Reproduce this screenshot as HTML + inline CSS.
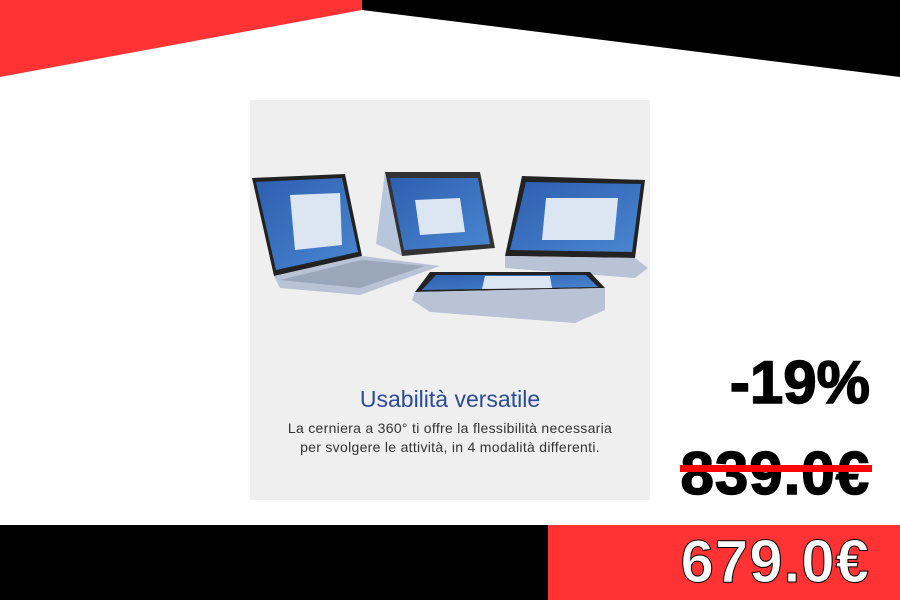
<!DOCTYPE html>
<html><head><meta charset="utf-8"><style>
*{margin:0;padding:0;box-sizing:border-box}
body{width:900px;height:600px;overflow:hidden;background:#fff;position:relative;font-family:"Liberation Sans",sans-serif}
.abs{position:absolute}
.card{left:250px;top:100px;width:400px;height:400px;background:#efefef}
.t1{left:250px;width:400px;top:386px;text-align:center;color:#2a4a9a;font-size:23px}
.t2{left:250px;width:400px;top:419px;text-align:center;color:#333;font-size:14px;line-height:19px;letter-spacing:0.3px}
.pr{right:30px;font-weight:bold;font-size:60px;line-height:60px;text-align:right}
</style></head><body>
<svg class="abs" style="left:0;top:0" width="900" height="80">
<polygon points="0,0 362,0 362,10 0,77" fill="#ff3333"/>
<polygon points="362,0 900,0 900,77 362,10" fill="#000"/>
</svg>
<div class="abs card"></div>
<svg class="abs" style="left:250px;top:160px" width="400" height="170">
<defs><linearGradient id="s" x1="0" y1="0" x2="1" y2="1"><stop offset="0" stop-color="#2d5fb0"/><stop offset="1" stop-color="#4a86d0"/></linearGradient></defs>
<polygon points="2,18 95,14 112,96 24,116" fill="#222"/>
<polygon points="6,22 92,18 108,92 26,110" fill="url(#s)"/>
<polygon points="40,35 90,33 92,85 45,90" fill="#dbe6f2"/>
<polygon points="24,116 112,96 190,106 110,135 30,128" fill="#b8c3d6"/>
<polygon points="30,120 112,100 175,106 110,128" fill="#9aa6ba"/>
<polygon points="135,12 230,12 245,88 152,96" fill="#333"/>
<polygon points="140,18 228,18 240,84 154,90" fill="url(#s)"/>
<polygon points="135,12 126,84 140,90 152,96" fill="#b8c6dc"/>
<polygon points="165,40 210,38 215,72 170,75" fill="#dbe6f2"/>
<polygon points="272,16 395,20 385,98 255,96" fill="#222"/>
<polygon points="276,22 391,24 382,92 260,90" fill="url(#s)"/>
<polygon points="296,38 368,38 364,80 292,80" fill="#dbe6f2"/>
<polygon points="255,96 385,98 398,108 385,118 255,108" fill="#b8c3d6"/>
<polygon points="180,112 340,112 355,128 165,132" fill="#222"/>
<polygon points="186,115 336,115 348,127 172,130" fill="url(#s)"/>
<polygon points="235,116 300,116 302,128 232,129" fill="#dbe6f2"/>
<polygon points="165,132 355,128 355,150 325,163 180,152 162,140" fill="#b8c3d6"/>
</svg>
<div class="abs t1">Usabilità versatile</div>
<div class="abs t2">La cerniera a 360° ti offre la flessibilità necessaria<br>per svolgere le attività, in 4 modalità differenti.</div>
<div class="abs pr" style="top:353px;color:#000;-webkit-text-stroke:1.5px #000">-19%</div>
<div class="abs pr" style="top:444px;color:#000;letter-spacing:1px;-webkit-text-stroke:1.5px #000">839.0€</div>
<div class="abs" style="left:680px;top:465px;width:192px;height:7px;background:#f00"></div>
<div class="abs" style="left:0;top:525px;width:548px;height:75px;background:#000"></div>
<div class="abs" style="left:548px;top:525px;width:352px;height:75px;background:#ff3333"></div>
<div class="abs pr" style="top:532px;color:#fff;-webkit-text-stroke:1px #000;letter-spacing:1px">679.0€</div>
</body></html>
